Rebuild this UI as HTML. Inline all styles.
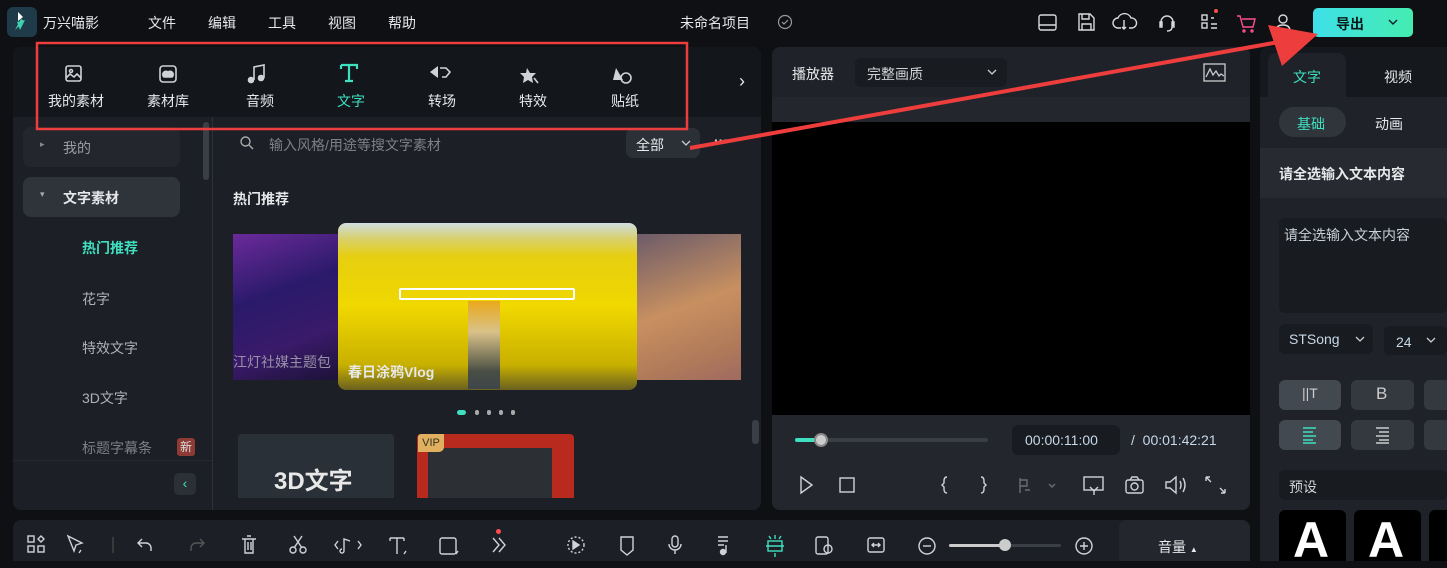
<!DOCTYPE html><html><head><meta charset="utf-8"><style>
*{margin:0;padding:0;box-sizing:border-box}
body{width:1447px;height:561px;background:#0e1014;font-family:"Liberation Sans","Noto Sans CJK SC",sans-serif;color:#e6e8ea;position:relative;overflow:hidden;font-size:14px}
.a{position:absolute}
.t{white-space:nowrap}
svg{display:block}
</style></head><body>
<!-- top bar -->
<div class="a" style="left:7px;top:7px;width:30px;height:30px;border-radius:6px;background:#1f3a48"></div>
<svg class="a" style="left:11px;top:10px" width="22" height="24"><path d="M7 2l5 5-5 4z" fill="#fff"/><path d="M13 11l-9 9 6-11z" fill="#48e3bd"/><path d="M6 12l8-2-5 10z" fill="#3ed0b0"/></svg>
<div class="a t" style="left:43px;top:13px;font-size:14px">万兴喵影</div>
<div class="a t" style="left:148px;top:13px;font-size:14px">文件</div>
<div class="a t" style="left:208px;top:13px;font-size:14px">编辑</div>
<div class="a t" style="left:268px;top:13px;font-size:14px">工具</div>
<div class="a t" style="left:328px;top:13px;font-size:14px">视图</div>
<div class="a t" style="left:388px;top:13px;font-size:14px">帮助</div>
<div class="a t" style="left:680px;top:13px;font-size:14px">未命名项目</div>
<svg class="a" style="left:777px;top:14px" width="16" height="16"><circle cx="8" cy="8" r="6.5" fill="none" stroke="#999" stroke-width="1.2"/><path d="M5 8l2 2 4-4" fill="none" stroke="#999" stroke-width="1.2"/></svg>
<svg class="a" style="left:1036px;top:10px" width="270" height="26" fill="none" stroke="#d8dadc" stroke-width="1.4">
<rect x="3" y="5" width="17" height="15" rx="2"/><path d="M3 15h17"/>
<path d="M43 4h11l4 4v12H43z M46 4v5h7V4 M46 20v-6h9v6"/>
<path d="M85 18h-3a5 5 0 0 1 0-10 7 7 0 0 1 13 0 5 5 0 0 1 1 10h-3 M88 10v9 M86 17l2 2 2-2"/>
<path d="M125 16v-4a6 6 0 0 1 12 0v4 M124 12h2v5h-2z M136 12h2v5h-2z M136 17q0 4-5 4"/>
<rect x="166" y="5" width="5" height="5"/><rect x="166" y="13" width="5" height="5"/><path d="M175 14h6M175 18h6M175 8h3"/>
<path d="M201 6h3l3 11h10l2-8h-13" stroke="#ff4f8a"/><circle cx="208" cy="21" r="1" stroke="#ff4f8a"/><circle cx="216" cy="21" r="1" stroke="#ff4f8a"/>
<circle cx="247" cy="9" r="4"/><path d="M240 21q0-6 7-6t7 6z"/>
</svg>
<div class="a" style="left:1214px;top:9px;width:4px;height:4px;border-radius:50%;background:#ff4b4b"></div>
<div class="a" style="left:1313px;top:8px;width:100px;height:29px;border-radius:5px;background:linear-gradient(90deg,#3ee0e8,#45ecb0)"></div>
<div class="a t" style="left:1336px;top:14px;color:#0b1a1a;font-weight:bold;font-size:14px">导出</div>
<svg class="a" style="left:1388px;top:18px" width="10" height="8"><path d="M1 2l4 4 4-4" fill="none" stroke="#123" stroke-width="1.5"/></svg>

<!-- left panel -->
<div class="a" style="left:13px;top:47px;width:748px;height:463px;background:#1c2026;border-radius:8px"></div>
<div class="a" style="left:13px;top:47px;width:748px;height:70px;background:#13161b;border-radius:8px 8px 0 0"></div>
<svg class="a" style="left:60px;top:60px" width="600" height="28" fill="none" stroke="#d0d3d6" stroke-width="1.6">
<rect x="6" y="6" width="15" height="15" rx="2"/><path d="M6 18l4-4 4 3 3-3 4 4"/><circle cx="11" cy="11" r="1.5"/>
<rect x="100" y="6" width="16" height="16" rx="3"/><path d="M104 17h8a3 3 0 0 0-4-5 3 3 0 0 0-4 5z" fill="#d0d3d6"/>
<path d="M194 20V7l10-2v13" /><circle cx="191" cy="20" r="2.5" fill="#d0d3d6"/><circle cx="201" cy="18" r="2.5" fill="#d0d3d6"/>
<path d="M281 5h16v4 M289 5v16 M285 21h8 M281 5v4" stroke="#3fe0c0" stroke-width="2.2"/>
<path d="M370 12l8-6v12z" fill="#d0d3d6" stroke="none"/><path d="M380 8h6l4 4-4 5h-4"/>
<path d="M467 8l3 5 6 0-4 4 1 6-5-3-5 3 1-6-4-4 6 0z" fill="#d0d3d6" stroke="none"/><path d="M474 18l4 5"/>
<path d="M553 20l3-12 7 12z" fill="#d0d3d6" stroke="none"/><circle cx="566" cy="18" r="5"/>
</svg>
<div class="a t" style="left:48px;top:91px;font-size:14px">我的素材</div>
<div class="a t" style="left:147px;top:91px;font-size:14px">素材库</div>
<div class="a t" style="left:246px;top:91px;font-size:14px">音频</div>
<div class="a t" style="left:337px;top:91px;font-size:14px;color:#3fe0c0">文字</div>
<div class="a t" style="left:428px;top:91px;font-size:14px">转场</div>
<div class="a t" style="left:519px;top:91px;font-size:14px">特效</div>
<div class="a t" style="left:611px;top:91px;font-size:14px">贴纸</div>
<div class="a t" style="left:739px;top:71px;font-size:18px">›</div>

<!-- sidebar -->
<div class="a" style="left:212px;top:117px;width:1px;height:393px;background:#2d3238"></div>
<div class="a" style="left:203px;top:122px;width:6px;height:58px;border-radius:3px;background:#3a3f46"></div>
<div class="a" style="left:23px;top:127px;width:157px;height:40px;border-radius:8px;background:#23272d"></div>
<div class="a t" style="left:40px;top:139px;font-size:9px;color:#888">▸</div>
<div class="a t" style="left:63px;top:138px;color:#9a9ea3">我的</div>
<div class="a" style="left:23px;top:177px;width:157px;height:40px;border-radius:8px;background:#2f343b"></div>
<div class="a t" style="left:40px;top:189px;font-size:9px;color:#aaa">▾</div>
<div class="a t" style="left:63px;top:188px;font-weight:bold">文字素材</div>
<div class="a t" style="left:82px;top:238px;color:#3fe0c0;font-weight:bold">热门推荐</div>
<div class="a t" style="left:82px;top:289px;color:#aeb2b6">花字</div>
<div class="a t" style="left:82px;top:338px;color:#aeb2b6">特效文字</div>
<div class="a t" style="left:82px;top:388px;color:#aeb2b6">3D文字</div>
<div class="a t" style="left:82px;top:438px;color:#7d8186">标题字幕条</div>
<div class="a t" style="left:177px;top:438px;width:18px;height:18px;background:#8e3a35;color:#ddd;font-size:12px;text-align:center;border-radius:3px;line-height:18px">新</div>
<div class="a" style="left:13px;top:460px;width:199px;height:50px;background:#1c2026;border-top:1px solid #262a30;border-radius:0 0 0 8px"></div>
<div class="a" style="left:174px;top:473px;width:22px;height:22px;border-radius:5px;background:#2b3036;color:#3fe0c0;text-align:center;line-height:21px;font-size:14px">‹</div>

<!-- search -->
<svg class="a" style="left:239px;top:135px" width="16" height="16" fill="none" stroke="#aaa" stroke-width="1.4"><circle cx="6.5" cy="6.5" r="4.5"/><path d="M10 10l4 4"/></svg>
<div class="a t" style="left:269px;top:135px;color:#7d8186;font-size:14px">输入风格/用途等搜文字素材</div>
<div class="a" style="left:626px;top:128px;width:74px;height:30px;border-radius:7px;background:#2b3036"></div>
<div class="a t" style="left:636px;top:135px">全部</div>
<svg class="a" style="left:681px;top:139px" width="10" height="8"><path d="M1 2l4 4 4-4" fill="none" stroke="#ccc" stroke-width="1.3"/></svg>
<div class="a t" style="left:714px;top:132px;color:#ccc;font-weight:bold">···</div>
<div class="a t" style="left:233px;top:189px;font-weight:bold">热门推荐</div>

<!-- carousel -->
<div class="a" style="left:233px;top:234px;width:110px;height:146px;background:linear-gradient(160deg,#6b2a9a 0%,#2a1a6a 40%,#3a1a6a 70%,#1a1236 100%)"></div>
<div class="a t" style="left:233px;top:352px;color:#9a8fa8;font-size:14px">江灯社媒主题包</div>
<div class="a" style="left:630px;top:234px;width:111px;height:146px;background:linear-gradient(160deg,#6a5a6a,#c89060 50%,#b07a5a 80%,#a06a60)"></div>
<div class="a" style="left:338px;top:223px;width:299px;height:167px;border-radius:8px;overflow:hidden;background:linear-gradient(180deg,#cfdfe0 0%,#d8d070 9%,#e6cf10 20%,#f0d800 50%,#c8b000 85%,#6a6020 100%)">
<div class="a" style="left:61px;top:65px;width:176px;height:12px;border:2px solid #fff;border-radius:2px"></div>
<div class="a" style="left:130px;top:78px;width:32px;height:88px;background:linear-gradient(180deg,#e8a020 0%,#d8c0a0 35%,#364050 80%);opacity:.85"></div>
<div class="a t" style="left:10px;top:139px;font-weight:bold;font-size:14px">春日涂鸦Vlog</div></div>
<div class="a" style="left:457px;top:410px;width:9px;height:5px;border-radius:3px;background:#3fe0c0"></div>
<div class="a" style="left:475px;top:410px;width:4px;height:5px;border-radius:2px;background:#aaa"></div>
<div class="a" style="left:487px;top:410px;width:4px;height:5px;border-radius:2px;background:#aaa"></div>
<div class="a" style="left:499px;top:410px;width:4px;height:5px;border-radius:2px;background:#aaa"></div>
<div class="a" style="left:511px;top:410px;width:4px;height:5px;border-radius:2px;background:#aaa"></div>
<div class="a" style="left:238px;top:434px;width:156px;height:64px;background:#2a3037;border-radius:4px 4px 0 0"></div>
<div class="a t" style="left:274px;top:461px;font-size:24px;font-weight:bold;color:#e8e8e8">3D文字</div>
<div class="a" style="left:417px;top:434px;width:157px;height:64px;background:#b82a1e;border-radius:4px 4px 0 0"></div>
<div class="a" style="left:428px;top:448px;width:124px;height:50px;background:#2c3035"></div>
<div class="a t" style="left:418px;top:434px;width:26px;height:18px;background:#e0b060;color:#332;font-size:11px;text-align:center;line-height:18px;border-radius:3px 0 5px 0">VIP</div>
<div class="a" style="left:752px;top:420px;width:7px;height:24px;border-radius:3px;background:#3a3f46"></div>

<!-- player -->
<div class="a" style="left:772px;top:47px;width:478px;height:463px;background:#1f2329;border-radius:8px;overflow:hidden">
<div class="a" style="left:0;top:50px;width:478px;height:25px;background:#23272d"></div>
<div class="a" style="left:0;top:75px;width:478px;height:293px;background:#000"></div>
<div class="a" style="left:0;top:368px;width:478px;height:95px;background:#23272d"></div>
</div>
<div class="a t" style="left:792px;top:64px">播放器</div>
<div class="a" style="left:855px;top:58px;width:152px;height:29px;border-radius:6px;background:#181b20"></div>
<div class="a t" style="left:867px;top:64px;color:#d0d3d6">完整画质</div>
<svg class="a" style="left:987px;top:68px" width="10" height="8"><path d="M1 2l4 4 4-4" fill="none" stroke="#ccc" stroke-width="1.3"/></svg>
<svg class="a" style="left:1203px;top:63px" width="24" height="20" fill="none" stroke="#ccc" stroke-width="1.3"><rect x="1" y="1" width="21" height="17"/><path d="M3 14l4-8 3 6 3-4 3 5 2-2 3 2"/></svg>
<div class="a" style="left:795px;top:438px;width:193px;height:4px;border-radius:2px;background:#3a3f46"></div>
<div class="a" style="left:795px;top:438px;width:26px;height:4px;border-radius:2px;background:#3fe0c0"></div>
<div class="a" style="left:814px;top:433px;width:14px;height:14px;border-radius:50%;background:#ccc;border:2px solid #888"></div>
<div class="a" style="left:1012px;top:425px;width:108px;height:30px;border-radius:6px;background:#181b20"></div>
<div class="a t" style="left:1025px;top:432px;color:#c8d8e8;font-size:14px">00:00:11:00</div>
<div class="a t" style="left:1131px;top:432px;color:#c8d8e8;font-size:14px">/&nbsp;&nbsp;00:01:42:21</div>
<svg class="a" style="left:795px;top:472px" width="440" height="26" fill="none" stroke="#d0d3d6" stroke-width="1.4">
<path d="M6 5l11 8-11 8z"/><rect x="45" y="6" width="14" height="14"/>
<path d="M152 5q-3 0-3 4v2l-2 2 2 2v2q0 4 3 4 M186 5q3 0 3 4v2l2 2-2 2v2q0 4-3 4"/>
<path d="M225 6v15 M225 8h7v6h-7 M230 18h5" stroke="#6a6e73"/><path d="M254 12l3 3 3-3" stroke="#6a6e73"/>
<rect x="289" y="5" width="19" height="13"/><path d="M299 18v5 M295 15l4 4 4-4"/>
<rect x="331" y="8" width="17" height="13" rx="2"/><circle cx="339.5" cy="14.5" r="3.5"/><path d="M335 8l2-3h5l2 3"/>
<path d="M371 10h4l6-5v16l-6-5h-4z M385 9q2 4 0 8 M388 6q4 7 0 14"/>
<path d="M411 5l5 5 M411 5h4 M411 5v4 M430 21l-5-5 M430 21h-4 M430 21v-4"/>
</svg>

<!-- right panel -->
<div class="a" style="left:1260px;top:47px;width:187px;height:514px;background:#1f2329;border-radius:8px 0 0 0"></div>
<div class="a" style="left:1260px;top:47px;width:187px;height:50px;background:#15181c;border-radius:8px 0 0 0"></div>
<div class="a" style="left:1268px;top:53px;width:78px;height:44px;background:#1f2329;border-radius:8px 8px 0 0"></div>
<div class="a t" style="left:1293px;top:67px;color:#3fe0c0">文字</div>
<div class="a t" style="left:1384px;top:67px">视频</div>
<div class="a" style="left:1279px;top:107px;width:67px;height:30px;border-radius:15px;background:#30353c"></div>
<div class="a t" style="left:1297px;top:114px;color:#3fe0c0">基础</div>
<div class="a t" style="left:1375px;top:114px">动画</div>
<div class="a" style="left:1260px;top:148px;width:187px;height:50px;background:#272b31"></div>
<div class="a t" style="left:1279px;top:164px;font-weight:bold">请全选输入文本内容</div>
<div class="a" style="left:1279px;top:218px;width:168px;height:95px;border-radius:6px;background:#181b20"></div>
<div class="a t" style="left:1284px;top:225px;color:#c8d0d8">请全选输入文本内容</div>
<div class="a" style="left:1279px;top:324px;width:94px;height:30px;border-radius:6px;background:#181b20"></div>
<div class="a t" style="left:1289px;top:331px;color:#c8d8e8">STSong</div>
<svg class="a" style="left:1355px;top:335px" width="10" height="8"><path d="M1 2l4 4 4-4" fill="none" stroke="#ccc" stroke-width="1.3"/></svg>
<div class="a" style="left:1384px;top:326px;width:63px;height:29px;border-radius:6px;background:#181b20"></div>
<div class="a t" style="left:1396px;top:334px;color:#c8d8e8">24</div>
<svg class="a" style="left:1426px;top:336px" width="10" height="8"><path d="M1 2l4 4 4-4" fill="none" stroke="#ccc" stroke-width="1.3"/></svg>
<div class="a" style="left:1279px;top:380px;width:62px;height:30px;border-radius:6px;background:#434950"></div>
<div class="a" style="left:1351px;top:380px;width:63px;height:30px;border-radius:6px;background:#343940"></div>
<div class="a" style="left:1424px;top:380px;width:23px;height:30px;border-radius:6px 0 0 6px;background:#343940"></div>
<div class="a t" style="left:1302px;top:385px;color:#ccc;font-size:14px">||T</div>
<div class="a t" style="left:1376px;top:384px;color:#ccc;font-size:17px">B</div>
<div class="a" style="left:1279px;top:420px;width:62px;height:30px;border-radius:6px;background:#434950"></div>
<div class="a" style="left:1351px;top:420px;width:63px;height:30px;border-radius:6px;background:#343940"></div>
<div class="a" style="left:1424px;top:420px;width:23px;height:30px;border-radius:6px 0 0 6px;background:#343940"></div>
<svg class="a" style="left:1302px;top:426px" width="110" height="18" stroke-width="1.6"><path d="M1 2h13M1 6h10M1 10h13M1 14h10M1 17h13" stroke="#3fe0c0"/><path d="M74 2h13M77 6h10M74 10h13M77 14h10M74 17h13" stroke="#ccc"/></svg>
<div class="a" style="left:1279px;top:470px;width:168px;height:30px;border-radius:6px;background:#181b20"></div>
<div class="a t" style="left:1289px;top:477px;color:#d0d3d6">预设</div>
<div class="a" style="left:1279px;top:510px;width:67px;height:51px;border-radius:6px 6px 0 0;background:#000"></div>
<div class="a" style="left:1354px;top:510px;width:67px;height:51px;border-radius:6px 6px 0 0;background:#000"></div>
<div class="a" style="left:1429px;top:510px;width:18px;height:51px;border-radius:6px 0 0 0;background:#000"></div>
<div class="a t" style="left:1293px;top:515px;font-size:50px;font-weight:bold;color:#fff;line-height:50px">A</div>
<div class="a t" style="left:1368px;top:515px;font-size:50px;font-weight:bold;color:#fff;line-height:50px">A</div>

<!-- bottom toolbar -->
<div class="a" style="left:13px;top:520px;width:1237px;height:41px;background:#1c2026;border-radius:8px 8px 0 0"></div>
<div class="a" style="left:1119px;top:520px;width:131px;height:41px;background:#23272d;border-radius:8px 8px 0 0"></div>
<div class="a t" style="left:1158px;top:537px;font-size:14px">音量 <span style="font-size:8px">▲</span></div>
<svg class="a" style="left:26px;top:533px" width="1080" height="26" fill="none" stroke="#d0d3d6" stroke-width="1.4">
<rect x="2" y="3" width="6" height="6"/><rect x="2" y="13" width="6" height="6"/><rect x="12" y="13" width="6" height="6"/><path d="M12 6l3-3 3 3-3 3z"/>
<path d="M42 3l14 7-6 2-2 6z M55 17l-2 3"/>
<path d="M87 4v16" stroke="#444"/>
<path d="M116 6l-4 4 4 4 M112 10h8a5 5 0 0 1 5 5v3"/>
<path d="M174 6l4 4-4 4 M178 10h-8a5 5 0 0 0-5 5v3" stroke="#555"/>
<path d="M216 6h14 M219 6v14h8V6 M221 3h4 M222 9v8 M225 9v8"/>
<circle cx="267" cy="17" r="3"/><circle cx="277" cy="17" r="3"/><path d="M268 15l8-12 M276 15l-8-12"/>
<path d="M312 8l-3 4 3 4 M332 8l3 4-3 4 M318 18V6l6 2 M318 18a2 2 0 1 1-2-2"/>
<path d="M364 5h14 M371 5v16 M364 5v3 M378 5v3 M380 18l-2 3"/>
<rect x="414" y="5" width="16" height="16" rx="2"/><path d="M432 18l-2 3"/>
<path d="M467 5l6 7-6 7 M473 5l6 7-6 7"/>
<circle cx="550" cy="12" r="8" stroke-dasharray="2 2"/><path d="M547 8l6 4-6 4z" fill="#d0d3d6"/>
<path d="M595 4h12v13l-6 5-6-5z"/>
<rect x="646" y="3" width="6" height="11" rx="3"/><path d="M643 11a6 6 0 0 0 12 0 M649 17v4"/>
<path d="M692 4h10 M692 8h10 M692 12h6 M700 12v8" /><circle cx="697" cy="19" r="2.5" fill="#d0d3d6"/>
<g stroke="#3fe0c0"><rect x="742" y="8" width="14" height="10"/><path d="M740 13h18 M749 2v4 M749 20v4 M743 3l2 3 M755 3l-2 3"/></g>
<rect x="790" y="4" width="12" height="17" rx="2"/><circle cx="802" cy="16" r="4"/>
<rect x="842" y="5" width="16" height="14" rx="2"/><path d="M846 12h8 M848 10l-2 2 2 2 M852 10l2 2-2 2"/>
<circle cx="901" cy="13" r="8"/><path d="M897 13h8"/>
<circle cx="1058" cy="13" r="8"/><path d="M1054 13h8 M1058 9v8"/>
</svg>
<div class="a" style="left:496px;top:529px;width:5px;height:5px;border-radius:50%;background:#ff4b4b"></div>
<div class="a" style="left:949px;top:544px;width:112px;height:3px;border-radius:2px;background:#3a3f46"></div>
<div class="a" style="left:949px;top:544px;width:56px;height:3px;border-radius:2px;background:#ccc"></div>
<div class="a" style="left:999px;top:539px;width:12px;height:12px;border-radius:50%;background:#ccc"></div>

<!-- annotation overlay -->
<svg class="a" style="left:0;top:0" width="1447" height="561">
<rect x="37" y="43" width="650" height="86" fill="none" stroke="#ee3d3d" stroke-width="2.5"/>
<path d="M690 148L1290 40" stroke="#ee3d3d" stroke-width="4"/>
<path d="M1318 34L1268 25 1282 66z" fill="#ee3d3d"/>
</svg>
</body></html>
